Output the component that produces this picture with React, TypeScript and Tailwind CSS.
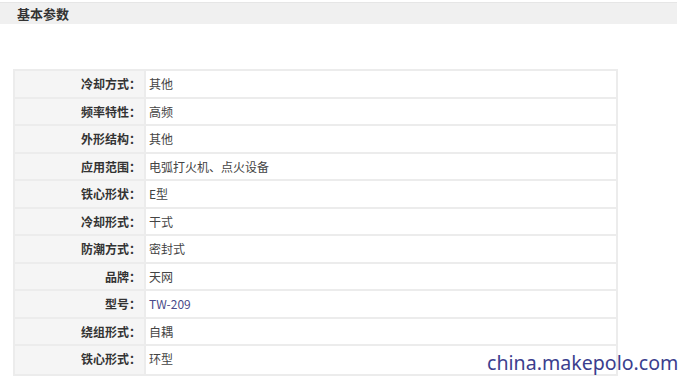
import React from "react";

const rows: [string, string][] = [
  ["冷却方式：", "其他"],
  ["频率特性：", "高频"],
  ["外形结构：", "其他"],
  ["应用范围：", "电弧打火机、点火设备"],
  ["铁心形状：", "E型"],
  ["冷却形式：", "干式"],
  ["防潮方式：", "密封式"],
  ["品牌：", "天网"],
  ["型号：", "TW-209"],
  ["绕组形式：", "自耦"],
  ["铁心形式：", "环型"],
];

export default function App() {
  return (
    <div
      className="relative w-[680px] h-[376px] overflow-hidden bg-white text-[#333]"
      style={{ fontFamily: '"Noto Sans CJK SC", "Noto Sans", sans-serif' }}
    >
      <div className="mt-[2px] h-[22px] w-[677px] bg-[#f0f0f0] border-t border-[#e6e6e6] pl-[17px] text-[13px] font-bold leading-[21px] text-[#333]">
        基本参数
      </div>
      <div className="mt-[45px] ml-[13px] w-[605px] border-2 border-[#ececec]">
        {rows.map(([k, v], i) => (
          <div
            key={i}
            className={`flex h-[27.5px] ${i < rows.length - 1 ? "border-b-2 border-[#ececec]" : ""}`}
          >
            <div className="w-[131px] shrink-0 bg-[#f5f5f5] border-r-2 border-[#ececec] pr-[3px] text-right text-[12px] font-bold leading-[25.5px] text-[#333]">
              {k}
            </div>
            <div
              className={`pl-[3px] text-[12px] leading-[25.5px] ${v === "TW-209" ? "text-[#4a4a8a]" : "text-[#444]"}`}
            >
              {v}
            </div>
          </div>
        ))}
      </div>
      <div
        className="absolute left-[487px] top-[350px] whitespace-nowrap text-[19.6px] leading-[26px] text-[#3b3e8e]"
        style={{ fontFamily: '"Noto Sans", sans-serif' }}
      >
        china.makepolo.com
      </div>
    </div>
  );
}
